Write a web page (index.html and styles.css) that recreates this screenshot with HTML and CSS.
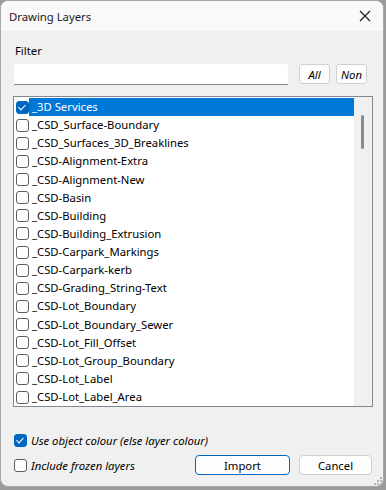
FILE: index.html
```html
<!DOCTYPE html>
<html lang="en">
<head>
    <meta charset="UTF-8">
    <title>Drawing Layers</title>
    <link rel="stylesheet" href="styles.css">
</head>
<body>

<div class="window">
    <div class="titlebar">
        <span class="title">Drawing Layers</span>
        <svg class="close" width="12" height="12" viewBox="0 0 12 12">
            <path d="M1 1 L11 11 M11 1 L1 11" stroke="#1a1a1a" stroke-width="1.1" fill="none"/>
        </svg>
    </div>

    <div class="content">
        <div class="filter-label">Filter</div>
        <div class="filter-row">
            <input type="text" class="filter-input">
            <button class="small-btn">All</button>
            <button class="small-btn">Non</button>
        </div>

        <div class="listbox">
            <ul class="items">
                <li class="item selected"><span class="check checked"></span><span class="name">_3D Services</span></li>
                <li class="item"><span class="check"></span><span class="name">_CSD_Surface-Boundary</span></li>
                <li class="item"><span class="check"></span><span class="name">_CSD_Surfaces_3D_Breaklines</span></li>
                <li class="item"><span class="check"></span><span class="name">_CSD-Alignment-Extra</span></li>
                <li class="item"><span class="check"></span><span class="name">_CSD-Alignment-New</span></li>
                <li class="item"><span class="check"></span><span class="name">_CSD-Basin</span></li>
                <li class="item"><span class="check"></span><span class="name">_CSD-Building</span></li>
                <li class="item"><span class="check"></span><span class="name">_CSD-Building_Extrusion</span></li>
                <li class="item"><span class="check"></span><span class="name">_CSD-Carpark_Markings</span></li>
                <li class="item"><span class="check"></span><span class="name">_CSD-Carpark-kerb</span></li>
                <li class="item"><span class="check"></span><span class="name">_CSD-Grading_String-Text</span></li>
                <li class="item"><span class="check"></span><span class="name">_CSD-Lot_Boundary</span></li>
                <li class="item"><span class="check"></span><span class="name">_CSD-Lot_Boundary_Sewer</span></li>
                <li class="item"><span class="check"></span><span class="name">_CSD-Lot_Fill_Offset</span></li>
                <li class="item"><span class="check"></span><span class="name">_CSD-Lot_Group_Boundary</span></li>
                <li class="item"><span class="check"></span><span class="name">_CSD-Lot_Label</span></li>
                <li class="item"><span class="check"></span><span class="name">_CSD-Lot_Label_Area</span></li>
            </ul>
            <div class="scrollbar"><div class="thumb"></div></div>
        </div>

        <div class="footer">
            <div class="option"><span class="check checked"></span><span class="option-text">Use object colour (else layer colour)</span></div>
            <div class="footer-row">
                <div class="option"><span class="check"></span><span class="option-text">Include frozen layers</span></div>
                <div class="buttons">
                    <button class="btn default">Import</button>
                    <button class="btn cancel">Cancel</button>
                </div>
            </div>
        </div>
    </div>

    <svg class="grip" width="10" height="10" viewBox="0 0 10 10">
        <rect x="8" y="2" width="2" height="2" fill="#b5b5b5"/>
        <rect x="5" y="5" width="2" height="2" fill="#b5b5b5"/>
        <rect x="8" y="5" width="2" height="2" fill="#b5b5b5"/>
        <rect x="2" y="8" width="2" height="2" fill="#b5b5b5"/>
        <rect x="5" y="8" width="2" height="2" fill="#b5b5b5"/>
        <rect x="8" y="8" width="2" height="2" fill="#b5b5b5"/>
    </svg>
</div>

</body>
</html>
```

FILE: styles.css
```css
/* General Reset */
* {
    margin: 0;
    padding: 0;
    box-sizing: border-box;
    font-family: "Noto Sans", "Open Sans", sans-serif;
}

body {
    background-color: #9a9a9a;
    width: 386px;
    height: 490px;
    overflow: hidden;
}

.window {
    width: 384px;
    height: 487px;
    background-color: #f0f0f0;
    border-radius: 8px;
    border: 1px solid #a8a8a8;
    position: relative;
    overflow: hidden;
}

.titlebar {
    height: 30px;
    background-color: #f9f9f9;
    display: flex;
    align-items: center;
    justify-content: space-between;
    padding: 0 12px 0 8px;
}

.title {
    font-size: 11.3px;
    color: #1a1a1a;
}

.content {
    padding: 12px 10px 0 12px;
}

.filter-label {
    font-size: 11.3px;
    color: #000;
    margin-left: 2px;
    height: 16px;
    line-height: 16px;
}

.filter-row {
    display: flex;
    align-items: flex-start;
    margin-top: 5px;
    margin-left: 1px;
}

.filter-input {
    width: 274px;
    height: 21px;
    border: none;
    border-bottom: 1px solid #868686;
    border-radius: 3px 3px 0 0;
    background-color: #fff;
    margin-right: 11px;
}

.small-btn {
    width: 31px;
    height: 20px;
    margin-right: 6px;
    background-color: #fdfdfd;
    border: 1px solid #d0d0d0;
    border-radius: 3px;
    font-size: 11.3px;
    font-style: italic;
    color: #000;
}

/* layer list */
.listbox {
    margin-top: 11px;
    width: 360px;
    height: 311px;
    border: 1px solid #828790;
    background-color: #fff;
    display: flex;
}

.items {
    list-style: none;
    flex: 1;
    padding-top: 1px;
}

.item {
    height: 18.125px;
    display: flex;
    align-items: center;
    padding-left: 2px;
}

.item .name {
    font-size: 11.3px;
    color: #000;
    padding-left: 3px;
    flex: 1;
    height: 18px;
    line-height: 18px;
}

.item.selected .name {
    background-color: #0078d7;
    color: #fff;
}

.check {
    width: 13px;
    height: 13px;
    border: 1px solid #5e5e5e;
    border-radius: 3px;
    background-color: #fff;
    flex-shrink: 0;
    position: relative;
}

.check.checked {
    background-color: #0067c0;
    border-color: #0067c0;
}

.check.checked::after {
    content: "";
    position: absolute;
    left: 3px;
    top: 1px;
    width: 3px;
    height: 6px;
    border: solid #fff;
    border-width: 0 1px 1px 0;
    transform: rotate(45deg);
}

.scrollbar {
    width: 18px;
    background-color: #f0f0f0;
    position: relative;
}

.thumb {
    position: absolute;
    left: 7px;
    top: 18px;
    width: 3px;
    height: 34px;
    border-radius: 2px;
    background-color: #8a8a8a;
}

/* bottom options */
.footer {
    margin-top: 24px;
    margin-left: 1px;
}

.option {
    display: flex;
    align-items: center;
    height: 18px;
}

.option-text {
    font-size: 11.3px;
    font-style: italic;
    color: #000;
    padding-left: 4px;
}

.footer-row {
    display: flex;
    justify-content: space-between;
    align-items: center;
    margin-top: 6px;
}

.buttons {
    display: flex;
    gap: 9px;
    margin-right: 1px;
}

.btn {
    height: 20px;
    border-radius: 4px;
    background-color: #fdfdfd;
    border: 1px solid #d0d0d0;
    font-size: 11.3px;
    color: #000;
}

.btn.default {
    width: 95px;
    border-color: #0067c0;
}

.btn.cancel {
    width: 73px;
}

.grip {
    position: absolute;
    right: 1px;
    bottom: 1px;
}
```
